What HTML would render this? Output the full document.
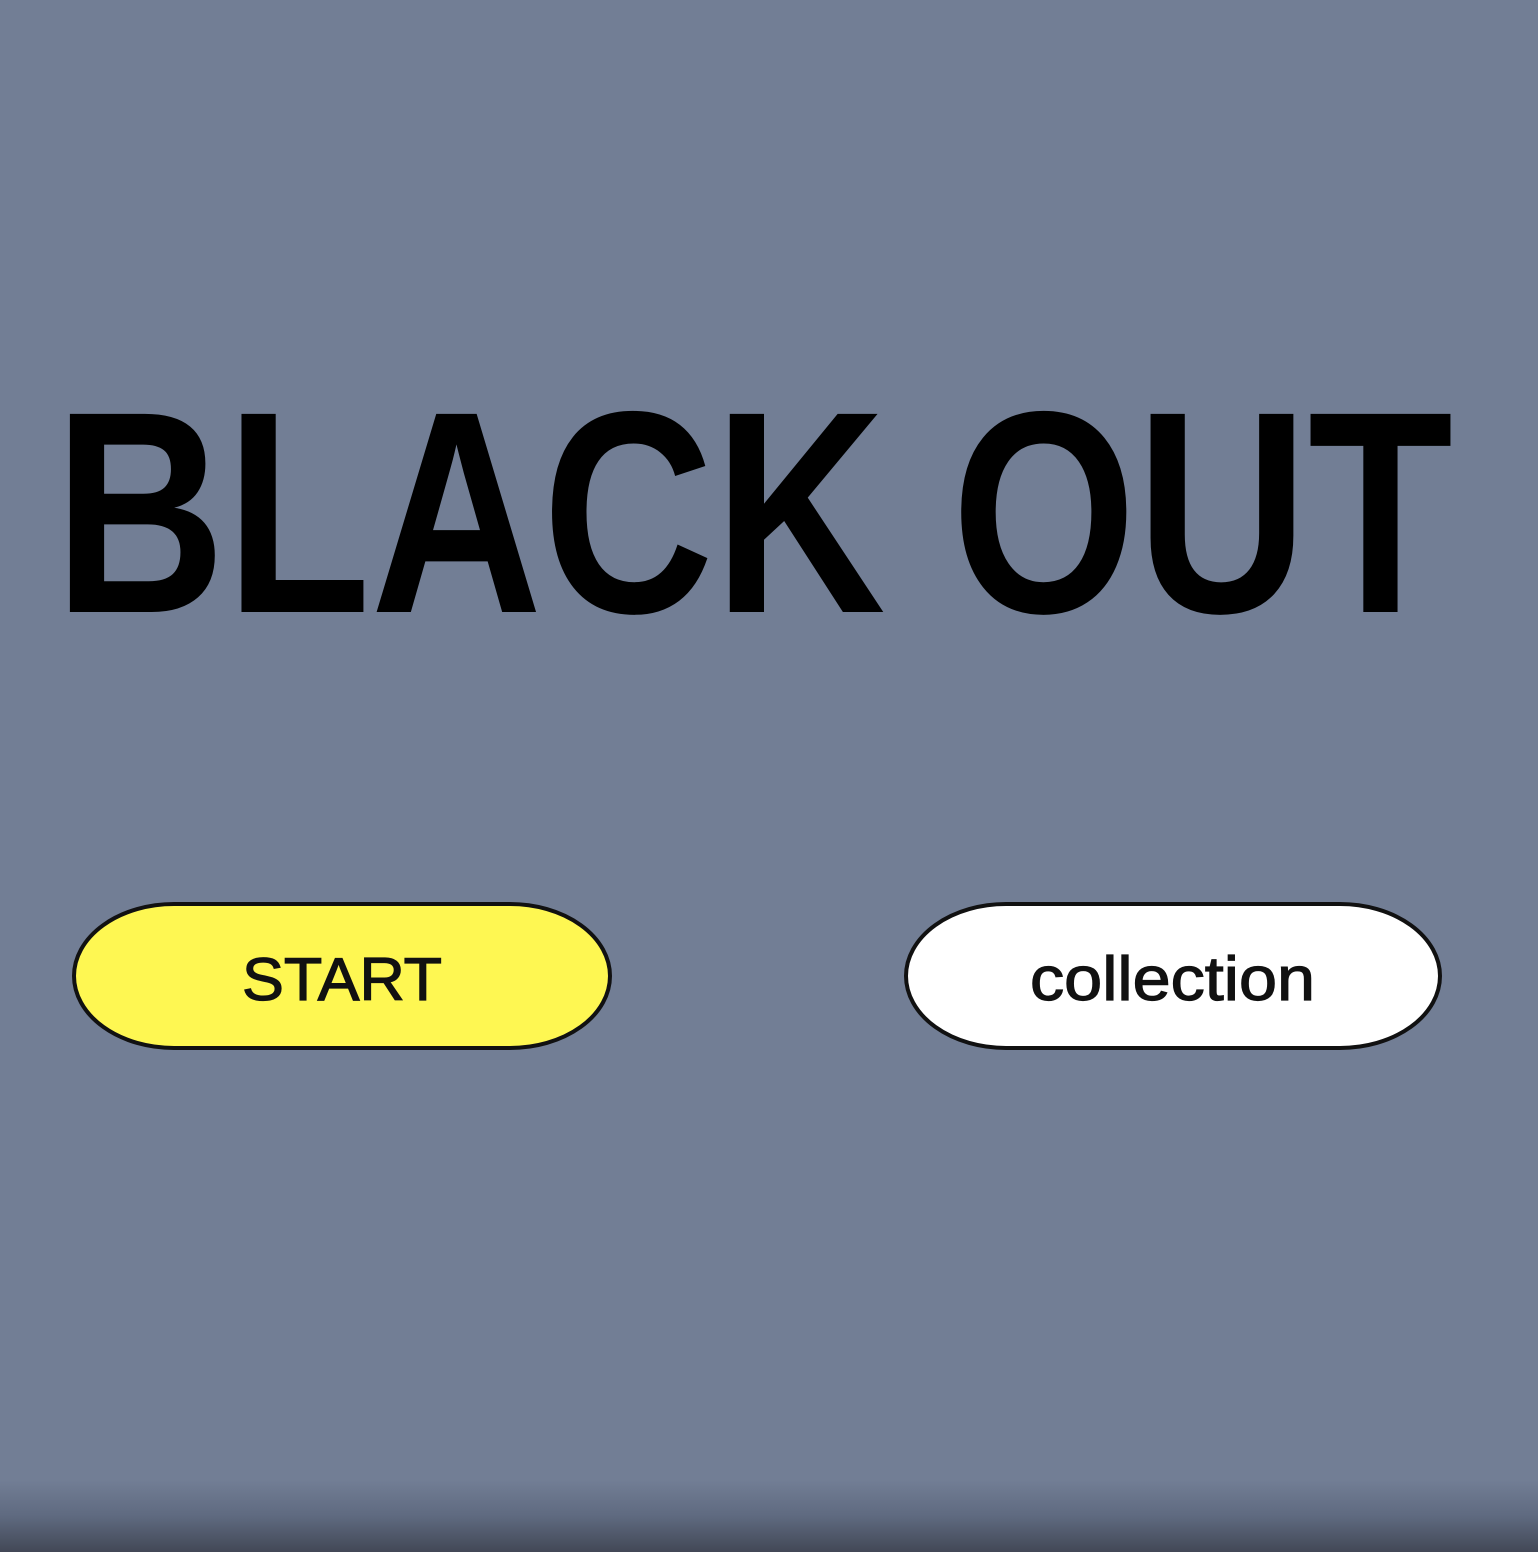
<!DOCTYPE html>
<html><head><meta charset="utf-8"><style>
html,body{margin:0;padding:0;width:1538px;height:1552px;overflow:hidden;background:#727e95;}
.fade{position:absolute;left:0;top:1480px;width:1538px;height:72px;background:linear-gradient(#727e9500,#5f6a80 50%,#424856);}
svg{position:absolute;left:0;top:0;}
</style></head><body>
<div class="fade"></div>
<svg width="1538" height="1552" viewBox="0 0 1538 1552">
<text x="54" y="612" font-family="Liberation Sans, sans-serif" font-weight="bold" font-size="288" fill="#000" textLength="1399" lengthAdjust="spacingAndGlyphs">BLACK OUT</text>
<rect x="74" y="904" width="536" height="144" rx="100" ry="72" fill="#fef752" stroke="#111" stroke-width="4"/>
<text x="242" y="1000" font-family="Liberation Sans, sans-serif" font-size="60" fill="#111" stroke="#111" stroke-width="1.2" textLength="200" lengthAdjust="spacingAndGlyphs">START</text>
<rect x="906" y="904" width="534" height="144" rx="100" ry="72" fill="#fff" stroke="#111" stroke-width="4"/>
<text x="1030" y="1000" font-family="Liberation Sans, sans-serif" font-size="62" fill="#111" stroke="#111" stroke-width="1.2" textLength="285" lengthAdjust="spacingAndGlyphs">collection</text>
</svg>
</body></html>
